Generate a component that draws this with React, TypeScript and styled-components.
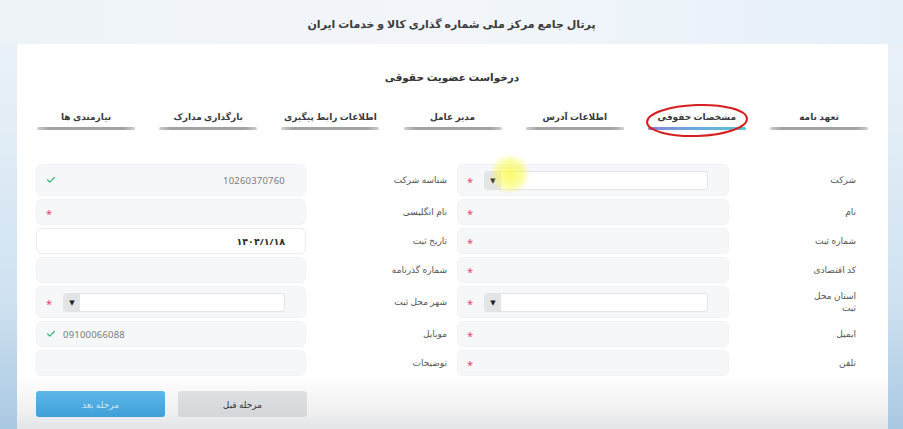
import React from "react";
import styled, { createGlobalStyle, css } from "styled-components";
import { Check } from "lucide-react";

const Global = createGlobalStyle`
  html, body { margin: 0; padding: 0; }
  body { font-family: "Noto Sans", "DejaVu Sans", sans-serif; }
  * { box-sizing: border-box; }
`;

const Page = styled.div`
  position: relative;
  width: 903px;
  height: 429px;
  overflow: hidden;
  display: flex;
  flex-direction: column;
  background: linear-gradient(180deg, #eef4f9 0%, #e2edf6 30%, #cfe2f1 70%, #a9c8e2 100%);
`;

const Header = styled.header`
  height: 44px;
  display: flex;
  align-items: center;
  justify-content: center;
  padding-top: 2px;
  background: linear-gradient(90deg, #eef3f8, #f2f6fa 50%, #e6f0f8);
`;

const Title = styled.h1`
  margin: 0;
  font-size: 11px;
  font-weight: 700;
  color: #3d3d3d;
  direction: rtl;
`;

const Card = styled.main`
  flex: 1;
  margin: 0 15px 0 17px;
  background: #ffffff;
  border-radius: 3px 3px 0 0;
  padding: 0 20px 0 19px;
  display: flex;
  flex-direction: column;
  direction: rtl;
`;

const Subtitle = styled.h2`
  margin: 23px 0 0;
  height: 20px;
  line-height: 20px;
  text-align: center;
  font-size: 10.5px;
  font-weight: 700;
  color: #333;
`;

const Tabs = styled.nav`
  margin-top: 20px;
  display: flex;
  justify-content: space-between;
  width: 831px;
`;

const Tab = styled.div<{ $active?: boolean }>`
  width: 98px;
  display: flex;
  flex-direction: column;
  align-items: center;
  font-size: 9px;
  font-weight: 700;
  color: #3a3a3a;
  line-height: 20px;
  white-space: nowrap;
  &::after {
    content: "";
    display: block;
    width: 100%;
    height: 3px;
    border-radius: 2px;
    background: ${(p) =>
      p.$active
        ? "linear-gradient(90deg, #8c82d8, #6aa9dc 50%, #55c8d2)"
        : "linear-gradient(90deg, #cfcfcf, #a2a2a2 12%, #a2a2a2 88%, #cfcfcf)"};
  }
`;

const Form = styled.section`
  margin-top: 34px;
  padding-right: 12px;
  display: flex;
  flex-direction: column;
  gap: 3px;
`;

const Row = styled.div<{ $tall?: boolean }>`
  display: grid;
  grid-template-columns: 127px 272px 151px 270px;
  height: ${(p) => (p.$tall ? 32 : 26)}px;
`;

const Label = styled.label<{ $inner?: boolean }>`
  display: flex;
  align-items: center;
  font-size: 9px;
  color: #555;
  line-height: 12px;
  white-space: nowrap;
  padding-right: ${(p) => (p.$inner ? 10 : 0)}px;
`;

const Field = styled.div<{ $white?: boolean }>`
  display: flex;
  align-items: center;
  border-radius: 6px;
  padding: 0 20px 0 9px;
  ${(p) =>
    p.$white
      ? css`
          background: #fff;
          border: 1px solid #ececee;
        `
      : css`
          background: #f6f7f9;
          border: 1px solid #f1f2f4;
        `}
`;

const Value = styled.span<{ $ltr?: boolean; $bold?: boolean }>`
  flex: 1;
  font-size: 9.5px;
  color: ${(p) => (p.$bold ? "#2e2e2e" : "#7a7a7a")};
  font-weight: ${(p) => (p.$bold ? 700 : 400)};
  text-align: ${(p) => (p.$ltr ? "left" : "right")};
  direction: ${(p) => (p.$ltr ? "ltr" : "rtl")};
  letter-spacing: 0.2px;
`;

const Marker = styled.span`
  width: 17px;
  display: flex;
  justify-content: flex-end;
  align-items: center;
  order: 2;
`;

const Star = styled.span`
  color: #e3476b;
  font-size: 11px;
  line-height: 1;
  margin-top: 3px;
`;

const SelectBox = styled.div`
  flex: 1;
  height: 19px;
  display: flex;
  background: #fff;
  border: 1px solid #e4e4e6;
  border-radius: 3px;
  overflow: hidden;
`;

const SelectInput = styled.span`
  flex: 1;
`;

const SelectArrow = styled.span`
  width: 16px;
  background: #e3e4e6;
  display: flex;
  align-items: center;
  justify-content: center;
  font-size: 7px;
  color: #222;
`;

const Footer = styled.footer`
  margin: 3px -20px 0 -19px;
  padding: 12px 20px 11px 19px;
  flex: 1;
  display: flex;
  justify-content: flex-end;
  gap: 13px;
  background: linear-gradient(180deg, #fdfdfd 0%, #f1f1f2 60%, #e4e5e7 100%);
`;

const Button = styled.button<{ $primary?: boolean }>`
  width: 129px;
  height: 26px;
  border: none;
  border-radius: 3px;
  font-family: inherit;
  font-size: 9px;
  ${(p) =>
    p.$primary
      ? css`
          background: linear-gradient(180deg, #5db7e8, #3f9fd8);
          color: #cfe6f6;
        `
      : css`
          background: linear-gradient(180deg, #dfe0e3, #d5d6d9);
          color: #333;
        `}
`;

const Ellipse = styled.svg`
  position: absolute;
  left: 644px;
  top: 102px;
  transform: rotate(-2deg);
`;

const Glow = styled.div`
  position: absolute;
  left: 490px;
  top: 154px;
  width: 40px;
  height: 40px;
  border-radius: 50%;
  background: radial-gradient(circle, rgba(250, 250, 70, 0.8) 0%, rgba(250, 250, 90, 0.55) 45%, rgba(255, 255, 150, 0) 72%);
  pointer-events: none;
`;

const tabs = [
  "تعهد نامه",
  "مشخصات حقوقی",
  "اطلاعات آدرس",
  "مدیر عامل",
  "اطلاعات رابط پیگیری",
  "بارگذاری مدارک",
  "نیازمندی ها",
];

type Cell =
  | { kind: "empty"; star?: boolean; check?: boolean; value?: string; ltr?: boolean; bold?: boolean; white?: boolean }
  | { kind: "select"; star?: boolean };

type RowDef = { tall?: boolean; rLabel: React.ReactNode; r: Cell; lLabel: string; l: Cell };

const rows: RowDef[] = [
  { tall: true, rLabel: "شرکت", r: { kind: "select", star: true }, lLabel: "شناسه شرکت", l: { kind: "empty", check: true, value: "10260370760" } },
  { rLabel: "نام", r: { kind: "empty", star: true }, lLabel: "نام انگلیسی", l: { kind: "empty", star: true } },
  { rLabel: "شماره ثبت", r: { kind: "empty", star: true }, lLabel: "تاریخ ثبت", l: { kind: "empty", value: "۱۴۰۴/۱/۱۸", bold: true, white: true } },
  { rLabel: "کد اقتصادی", r: { kind: "empty", star: true }, lLabel: "شماره گذرنامه", l: { kind: "empty" } },
  { tall: true, rLabel: <>استان محل<br />ثبت</>, r: { kind: "select", star: true }, lLabel: "شهر محل ثبت", l: { kind: "select", star: true } },
  { rLabel: "ایمیل", r: { kind: "empty", star: true }, lLabel: "موبایل", l: { kind: "empty", check: true, value: "09100066088", ltr: true } },
  { rLabel: "تلفن", r: { kind: "empty", star: true }, lLabel: "توضیحات", l: { kind: "empty" } },
];

function FieldCell({ cell }: { cell: Cell }) {
  const white = cell.kind === "empty" && cell.white;
  return (
    <Field $white={white}>
      {cell.kind === "select" ? (
        <SelectBox>
          <SelectInput />
          <SelectArrow>▼</SelectArrow>
        </SelectBox>
      ) : (
        <Value $ltr={cell.ltr} $bold={cell.bold}>
          {cell.value}
        </Value>
      )}
      <Marker>
        {cell.star && <Star>*</Star>}
        {cell.kind === "empty" && cell.check && <Check size={10} strokeWidth={3} color="#3bb47c" />}
      </Marker>
    </Field>
  );
}

export default function App() {
  return (
    <>
      <Global />
      <Page>
        <Header>
          <Title>پرتال جامع مرکز ملی شماره گذاری کالا و خدمات ایران</Title>
        </Header>
        <Card>
          <Subtitle>درخواست عضویت حقوقی</Subtitle>
          <Tabs>
            {tabs.map((t, i) => (
              <Tab key={t} $active={i === 1}>
                {t}
              </Tab>
            ))}
          </Tabs>
          <Form>
            {rows.map((r, i) => (
              <Row key={i} $tall={r.tall}>
                <Label>{r.rLabel}</Label>
                <FieldCell cell={r.r} />
                <Label $inner>{r.lLabel}</Label>
                <FieldCell cell={r.l} />
              </Row>
            ))}
          </Form>
          <Footer>
            <Button>مرحله قبل</Button>
            <Button $primary>مرحله بعد</Button>
          </Footer>
        </Card>
        <Ellipse width="106" height="37" viewBox="0 0 106 37">
          <ellipse cx="53" cy="18.5" rx="50" ry="15.5" fill="none" stroke="#d61f1f" strokeWidth="2" />
        </Ellipse>
        <Glow />
      </Page>
    </>
  );
}
